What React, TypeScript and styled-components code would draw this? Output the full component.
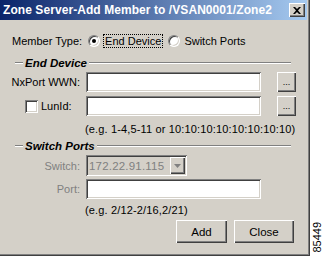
import React from "react";
import styled, { createGlobalStyle } from "styled-components";

const Global = createGlobalStyle`
  html, body { margin: 0; padding: 0; background: #ffffff; }
  body { font-family: "Liberation Sans", Arial, sans-serif; font-size: 11px; }
  * { box-sizing: border-box; }
`;

const Page = styled.div`
  display: flex;
  width: 323px;
  height: 257px;
  background: #ffffff;
`;

const Dialog = styled.div`
  width: 310px;
  height: 256px;
  background: #d4d0c8;
  box-shadow: inset -1px -1px 0 #404040, inset -2px -2px 0 #808080;
  padding: 0 3px 0 0;
  display: flex;
  flex-direction: column;
  color: #000;
`;

const TitleBar = styled.div`
  height: 20px;
  background: linear-gradient(to right, #0a246a, #a6caf0);
  display: flex;
  align-items: center;
  justify-content: space-between;
  padding: 0 2px 0 3px;
`;

const Title = styled.span`
  color: #fff;
  font-family: "Liberation Sans", Arial, sans-serif;
  font-weight: bold;
  font-size: 12px;
  letter-spacing: 0.07px;
  white-space: nowrap;
`;

const CloseBox = styled.div`
  width: 16px;
  height: 14px;
  background: #d4d0c8;
  box-shadow: inset 1px 1px 0 #ffffff, inset -1px -1px 0 #404040,
    inset -2px -2px 0 #808080;
  display: flex;
  align-items: center;
  justify-content: center;
`;

const Body = styled.div`
  flex: 1;
  display: flex;
  flex-direction: column;
  font-size: 11px;
`;

const TypeRow = styled.div`
  display: flex;
  align-items: center;
  height: 14px;
  margin: 14px 0 0 12px;
`;

const Label = styled.span<{ $disabled?: boolean }>`
  color: ${(p) => (p.$disabled ? "#808080" : "#000")};
  white-space: nowrap;
`;

const Radio = styled.span<{ $checked?: boolean }>`
  position: relative;
  width: 12px;
  height: 12px;
  border-radius: 50%;
  background: #fff;
  border: 1px solid #808080;
  border-right-color: #fff;
  border-bottom-color: #fff;
  box-shadow: inset 1px 1px 0 #404040, inset -1px -1px 0 #d4d0c8;
  margin: 0 4px 0 6px;
  flex: none;
  &::after {
    content: "";
    display: ${(p) => (p.$checked ? "block" : "none")};
    position: absolute;
    left: 3px;
    top: 3px;
    width: 4px;
    height: 4px;
    border-radius: 50%;
    background: #000;
  }
`;

const Focus = styled.span`
  outline: 1px dotted #000;
  outline-offset: 0px;
  padding: 0 1px;
`;

const GroupHeader = styled.div<{ $top: number }>`
  display: flex;
  align-items: center;
  margin: ${(p) => p.$top}px 16px 0 15px;
  height: 14px;
`;

const Etch = styled.span<{ $grow?: boolean }>`
  height: 2px;
  border-top: 1px solid #808080;
  border-bottom: 1px solid #ffffff;
  width: 8px;
  flex: ${(p) => (p.$grow ? 1 : "none")};
`;

const GroupTitle = styled.span`
  font-weight: bold;
  font-style: italic;
  font-size: 11.5px;
  padding: 0 2px;
`;

const FieldRow = styled.div<{ $top: number }>`
  display: grid;
  grid-template-columns: 80px auto auto;
  align-items: center;
  column-gap: 6px;
  margin-top: ${(p) => p.$top}px;
  height: 20px;
`;

const RowLabel = styled.div`
  display: flex;
  justify-content: flex-end;
  align-items: center;
`;

const CheckLabel = styled.div`
  display: flex;
  align-items: center;
  justify-content: flex-start;
  padding-left: 25px;
`;

const Check = styled.span`
  width: 13px;
  height: 13px;
  background: #fff;
  box-shadow: inset 1px 1px 0 #808080, inset -1px -1px 0 #ffffff,
    inset 2px 2px 0 #404040, inset -2px -2px 0 #d4d0c8;
  margin-right: 3px;
`;

const Input = styled.div<{ $w: number }>`
  width: ${(p) => p.$w}px;
  height: 20px;
  background: #fff;
  box-shadow: inset 1px 1px 0 #808080, inset -1px -1px 0 #ffffff,
    inset 2px 2px 0 #404040, inset -2px -2px 0 #d4d0c8;
`;

const Combo = styled.div`
  width: 101px;
  height: 21px;
  background: #d4d0c8;
  box-shadow: inset 1px 1px 0 #808080, inset -1px -1px 0 #ffffff,
    inset 2px 2px 0 #404040, inset -2px -2px 0 #d4d0c8;
  display: flex;
  align-items: center;
  padding: 2px;
`;

const ComboText = styled.span`
  flex: 1;
  color: #808080;
  padding-left: 1px;
  font-size: 11.5px;
  letter-spacing: 0.2px;
`;

const ComboButton = styled.span`
  width: 15px;
  height: 17px;
  background: #d4d0c8;
  box-shadow: inset 1px 1px 0 #ffffff, inset -1px -1px 0 #404040,
    inset -2px -2px 0 #808080;
  display: flex;
  align-items: center;
  justify-content: center;
`;

const DotsButton = styled.div`
  width: 19px;
  height: 20px;
  margin-left: -1px;
  background: #d4d0c8;
  box-shadow: inset 1px 1px 0 #ffffff, inset -1px -1px 0 #404040,
    inset -2px -2px 0 #808080;
  display: flex;
  align-items: flex-end;
  justify-content: center;
  padding-bottom: 5px;
  font-size: 9px;
  line-height: 9px;
`;

const Hint = styled.div<{ $top: number }>`
  margin: ${(p) => p.$top}px 0 0 85px;
  height: 14px;
  line-height: 14px;
  white-space: nowrap;
  letter-spacing: 0.15px;
`;

const ButtonBar = styled.div`
  display: flex;
  justify-content: flex-end;
  gap: 7px;
  margin: 3px 13px 0 0;
`;

const Button = styled.div<{ $w: number }>`
  width: ${(p) => p.$w}px;
  height: 23px;
  background: #d4d0c8;
  box-shadow: inset 1px 1px 0 #ffffff, inset -1px -1px 0 #404040,
    inset -2px -2px 0 #808080;
  display: flex;
  align-items: center;
  justify-content: center;
  font-size: 11.5px;
`;

const Side = styled.div`
  flex: 1;
  display: flex;
  align-items: flex-end;
  justify-content: center;
  padding-bottom: 4px;
`;

const Figure = styled.span`
  writing-mode: vertical-rl;
  transform: rotate(180deg);
  font-family: "Liberation Sans", Arial, sans-serif;
  font-size: 11px;
  color: #000;
`;

export default function App() {
  return (
    <>
      <Global />
      <Page>
        <Dialog>
          <TitleBar>
            <Title>Zone Server-Add Member to /VSAN0001/Zone2</Title>
            <CloseBox>
              <svg width="8" height="7" viewBox="0 0 8 7">
                <path d="M0 0 L2 0 L4 2 L6 0 L8 0 L5 3.5 L8 7 L6 7 L4 5 L2 7 L0 7 L3 3.5 Z" fill="#000" />
              </svg>
            </CloseBox>
          </TitleBar>
          <Body>
            <TypeRow>
              <Label>Member Type:</Label>
              <Radio $checked />
              <Focus>End Device</Focus>
              <Radio />
              <Label>Switch Ports</Label>
            </TypeRow>
            <GroupHeader $top={8}>
              <Etch />
              <GroupTitle>End Device</GroupTitle>
              <Etch $grow />
            </GroupHeader>
            <FieldRow $top={2}>
              <RowLabel>
                <Label>NxPort WWN:</Label>
              </RowLabel>
              <Input $w={175} />
              <DotsButton>...</DotsButton>
            </FieldRow>
            <FieldRow $top={4}>
              <CheckLabel>
                <Check />
                <Label>LunId:</Label>
              </CheckLabel>
              <Input $w={175} />
              <DotsButton>...</DotsButton>
            </FieldRow>
            <Hint $top={6}>(e.g. 1-4,5-11 or 10:10:10:10:10:10:10:10)</Hint>
            <GroupHeader $top={3}>
              <Etch />
              <GroupTitle>Switch Ports</GroupTitle>
              <Etch $grow />
            </GroupHeader>
            <FieldRow $top={2}>
              <RowLabel>
                <Label $disabled>Switch:</Label>
              </RowLabel>
              <Combo>
                <ComboText>172.22.91.115</ComboText>
                <ComboButton>
                  <svg width="7" height="4" viewBox="0 0 7 4">
                    <path d="M0 0 H7 L3.5 4 Z" fill="#808080" />
                  </svg>
                </ComboButton>
              </Combo>
            </FieldRow>
            <FieldRow $top={4}>
              <RowLabel>
                <Label $disabled>Port:</Label>
              </RowLabel>
              <Input $w={175} />
            </FieldRow>
            <Hint $top={4}>(e.g. 2/12-2/16,2/21)</Hint>
            <ButtonBar>
              <Button $w={51}>Add</Button>
              <Button $w={60}>Close</Button>
            </ButtonBar>
          </Body>
        </Dialog>
        <Side>
          <Figure>85449</Figure>
        </Side>
      </Page>
    </>
  );
}
